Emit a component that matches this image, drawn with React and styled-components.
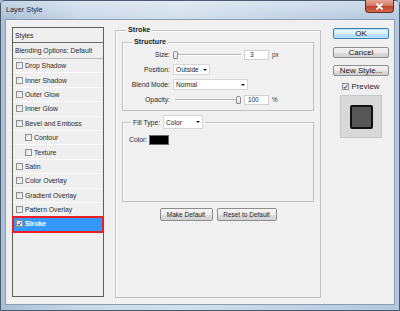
import React from 'react';
import styled, { createGlobalStyle } from 'styled-components';

const GlobalStyle = createGlobalStyle`
  html, body {
    margin: 0;
    padding: 0;
    background: #9fb4cc;
  }
  body {
    width: 400px;
    height: 311px;
    overflow: hidden;
    font-family: "Liberation Sans", Arial, sans-serif;
    color: #1f1f1f;
  }
`;

const Window = styled.div`
  width: 400px;
  height: 311px;
  box-sizing: border-box;
  display: flex;
  flex-direction: column;
  border: 1px solid #4a5a6c;
  border-radius: 5px 5px 0 0;
  background: linear-gradient(90deg, #a9bfd6 0%, #c9d8e8 20%, #d2dfec 45%, #c3d4e6 70%, #b3c8de 100%);
`;

const TitleBar = styled.div`
  height: 18px;
  display: flex;
  justify-content: space-between;
  align-items: flex-start;
  padding-left: 5px;
  background: linear-gradient(180deg, rgba(255,255,255,0.35), rgba(255,255,255,0));
`;

const Title = styled.span`
  font-size: 7.3px;
  line-height: 18px;
  color: #1c2a3a;
`;

const CloseButton = styled.div`
  width: 29px;
  height: 13px;
  margin: -1px 5px 0 0;
  box-sizing: border-box;
  border: 1px solid #6e2a20;
  border-top: none;
  border-radius: 0 0 4px 4px;
  background: linear-gradient(180deg, #e6a898 0%, #d47a64 45%, #c1442c 55%, #d06a4c 100%);
  display: flex;
  align-items: center;
  justify-content: center;
`;

const Client = styled.div`
  flex: 1;
  margin: 0 4px 5px 4px;
  border: 1px solid #8a9cb1;
  background: #f0f0f0;
  display: flex;
  align-items: flex-start;
  padding: 6px 0 0 6px;
`;

const StylesPanel = styled.div`
  width: 92px;
  height: 270px;
  margin-top: 1px;
  box-sizing: border-box;
  border: 1px solid #5e5e5e;
  background: #efefef;
  display: flex;
  flex-direction: column;
`;

const PanelHeader = styled.div`
  height: ${(p) => p.$h}px;
  box-sizing: border-box;
  border-bottom: 1px solid ${(p) => p.$line};
  display: flex;
  align-items: center;
  padding-left: 2px;
  font-size: 6.8px;
`;

const PanelRow = styled.div`
  height: 14.4px;
  box-sizing: border-box;
  border-bottom: 1px solid ${(p) => (p.$selected ? '#3399ff' : '#fbfbfb')};
  display: flex;
  align-items: center;
  gap: 2px;
  padding-left: ${(p) => (p.$indent ? 12 : 3)}px;
  font-size: 6.8px;
  color: ${(p) => (p.$selected ? '#ffffff' : '#2a2a2a')};
  font-weight: ${(p) => (p.$selected ? 700 : 400)};
  background: ${(p) => (p.$selected ? '#3399ff' : 'transparent')};
  outline: ${(p) => (p.$selected ? '2px solid #ee1c24' : 'none')};
  outline-offset: -1px;
`;

const CheckBox = styled.span`
  width: 7px;
  height: 7px;
  box-sizing: border-box;
  border: 1px solid #8f8f8f;
  background: linear-gradient(135deg, #dcdcdc, #ffffff);
  display: inline-flex;
  align-items: center;
  justify-content: center;
  flex-shrink: 0;
`;

const GroupBox = styled.fieldset`
  margin: ${(p) => p.$margin || '0'};
  padding: ${(p) => p.$pad || '0'};
  box-sizing: border-box;
  width: ${(p) => p.$w}px;
  height: ${(p) => (p.$h ? `${p.$h}px` : 'auto')};
  border: 1px solid #c2c2c2;
  box-shadow: inset 1px 1px 0 #fbfbfb;
  min-width: 0;
`;

const GroupLegend = styled.legend`
  margin-left: ${(p) => p.$offset}px;
  padding: 0 2px;
  font-size: 7.2px;
  line-height: 8px;
  font-weight: 700;
  color: #1a1a1a;
`;

const FillLegend = styled.legend`
  margin-left: 8px;
  padding: 0 2px;
  display: flex;
  align-items: center;
  gap: 3px;
  font-size: 6.8px;
`;

const FieldRow = styled.div`
  height: 15px;
  display: flex;
  align-items: center;
`;

const FieldLabel = styled.span`
  width: 47px;
  margin-right: ${(p) => p.$gap || 3}px;
  text-align: right;
  font-size: 6.8px;
  color: #2a2a2a;
`;

const Slider = styled.div`
  width: ${(p) => p.$w}px;
  height: 9px;
  display: flex;
  align-items: center;
  justify-content: ${(p) => (p.$end ? 'flex-end' : 'flex-start')};
  background: linear-gradient(180deg, transparent 4px, #b5b5b5 4px, #b5b5b5 5px, #ffffff 5px, #ffffff 6px, transparent 6px);
  margin-right: 3px;
`;

const Thumb = styled.span`
  width: 5px;
  height: 8px;
  box-sizing: border-box;
  border: 1px solid #8a8a8a;
  border-radius: 2px 2px 1px 1px;
  background: linear-gradient(180deg, #ffffff, #e2e2e2);
`;

const NumberBox = styled.div`
  width: 25px;
  height: 10px;
  box-sizing: border-box;
  border: 1px solid #d2d2d2;
  background: #ffffff;
  display: flex;
  align-items: center;
  padding-left: ${(p) => p.$pad}px;
  font-size: 6.4px;
`;

const Unit = styled.span`
  margin-left: 3px;
  font-size: 6.4px;
  color: #3a3a3a;
`;

const Select = styled.div`
  width: ${(p) => p.$w}px;
  height: ${(p) => p.$h}px;
  box-sizing: border-box;
  border: 1px solid #d6d6d6;
  background: #ffffff;
  display: flex;
  align-items: center;
  justify-content: space-between;
  padding: 0 2px 0 2px;
  font-size: 6.6px;
  font-weight: 400;
  color: #1a1a1a;
`;

const Arrow = styled.span`
  width: 0;
  height: 0;
  border-left: 2px solid transparent;
  border-right: 2px solid transparent;
  border-top: 2.5px solid #111;
`;

const ColorRow = styled.div`
  display: flex;
  align-items: flex-start;
  gap: 2px;
  padding: 6px 0 0 6px;
  height: 66px;
  font-size: 6.8px;
  color: #2a2a2a;
`;

const ColorText = styled.span`
  line-height: 10px;
`;

const Swatch = styled.span`
  width: 20px;
  height: 10px;
  box-sizing: border-box;
  border: 1px solid #6a6a6a;
  background: #000000;
`;

const ButtonRow = styled.div`
  display: flex;
  justify-content: center;
  gap: 4px;
  margin-top: 6px;
`;

const SmallButton = styled.div`
  width: ${(p) => p.$w}px;
  height: 13px;
  box-sizing: border-box;
  border: 1px solid #8d8d8d;
  border-radius: 2px;
  background: linear-gradient(180deg, #f5f5f5 0%, #ebebeb 50%, #dcdcdc 51%, #d2d2d2 100%);
  display: flex;
  align-items: center;
  justify-content: center;
  font-size: 6.5px;
  color: #1f1f1f;
`;

const SideColumn = styled.div`
  width: 56px;
  margin: 2px 0 0 12px;
  display: flex;
  flex-direction: column;
  align-items: center;
`;

const DialogButton = styled.div`
  width: 56px;
  height: 11px;
  box-sizing: border-box;
  margin-bottom: ${(p) => p.$mb}px;
  border: 1px solid ${(p) => (p.$primary ? '#3c7fb1' : '#8e8e8e')};
  border-radius: 2px;
  background: ${(p) =>
    p.$primary
      ? 'linear-gradient(180deg, #eaf6fd 0%, #d9f0fc 50%, #bee6fd 51%, #a7d9f5 100%)'
      : 'linear-gradient(180deg, #f2f2f2 0%, #ebebeb 50%, #dddddd 51%, #cfcfcf 100%)'};
  box-shadow: ${(p) => (p.$primary ? 'inset 0 0 0 1px #bfe6fa' : 'none')};
  display: flex;
  align-items: center;
  justify-content: center;
  font-size: 8px;
  color: #1a1a1a;
`;

const PreviewCheck = styled.div`
  display: flex;
  align-items: center;
  gap: 2px;
  font-size: 7.9px;
  height: 9px;
  margin-top: -1px;
`;

const PreviewBox = styled.div`
  width: 42px;
  height: 43px;
  margin-top: 4px;
  box-sizing: border-box;
  border: 1px solid #c6c6c6;
  background: #d8d8d8;
  display: flex;
  align-items: center;
  justify-content: center;
`;

const PreviewSwatch = styled.div`
  width: 23px;
  height: 24px;
  box-sizing: border-box;
  border: 2px solid #111;
  border-radius: 2px;
  background: #565656;
`;

const Check = () => (
  <svg width="6" height="6" viewBox="0 0 6 6">
    <path d="M1 3 L2.5 4.8 L5 0.8" fill="none" stroke="#1f3fa6" strokeWidth="1.2" />
  </svg>
);

const effects = [
  { name: 'Drop Shadow' },
  { name: 'Inner Shadow' },
  { name: 'Outer Glow' },
  { name: 'Inner Glow' },
  { name: 'Bevel and Emboss' },
  { name: 'Contour', indent: true },
  { name: 'Texture', indent: true },
  { name: 'Satin' },
  { name: 'Color Overlay' },
  { name: 'Gradient Overlay' },
  { name: 'Pattern Overlay' },
  { name: 'Stroke', selected: true },
];

export default function App() {
  return (
    <>
      <GlobalStyle />
      <Window>
        <TitleBar>
          <Title>Layer Style</Title>
          <CloseButton>
            <svg width="9" height="7" viewBox="0 0 9 7">
              <path d="M1.5 0.5 L7.5 6.5 M7.5 0.5 L1.5 6.5" stroke="#ffffff" strokeWidth="1.8" />
            </svg>
          </CloseButton>
        </TitleBar>
        <Client>
          <StylesPanel>
            <PanelHeader $h={15} $line="#6a6a6a">Styles</PanelHeader>
            <PanelHeader $h={16} $line="#bdbdbd">Blending Options: Default</PanelHeader>
            {effects.map((e) => (
              <PanelRow key={e.name} $indent={e.indent} $selected={e.selected}>
                <CheckBox>{e.selected && <Check />}</CheckBox>
                {e.name}
              </PanelRow>
            ))}
          </StylesPanel>

          <GroupBox $w={206} $h={272} $margin="0 0 0 11px" $pad="4px 6px 0 6px">
            <GroupLegend $offset={4}>Stroke</GroupLegend>
            <GroupBox $w={192} $pad="1px 0 3px 0">
              <GroupLegend $offset={9}>Structure</GroupLegend>
              <FieldRow>
                <FieldLabel>Size:</FieldLabel>
                <Slider $w={68}>
                  <Thumb />
                </Slider>
                <NumberBox $pad={5}>3</NumberBox>
                <Unit>px</Unit>
              </FieldRow>
              <FieldRow>
                <FieldLabel>Position:</FieldLabel>
                <Select $w={37} $h={11}>
                  Outside
                  <Arrow />
                </Select>
              </FieldRow>
              <FieldRow>
                <FieldLabel>Blend Mode:</FieldLabel>
                <Select $w={75} $h={11}>
                  Normal
                  <Arrow />
                </Select>
              </FieldRow>
              <FieldRow>
                <FieldLabel $gap={5}>Opacity:</FieldLabel>
                <Slider $w={66} $end>
                  <Thumb />
                </Slider>
                <NumberBox $pad={3}>100</NumberBox>
                <Unit>%</Unit>
              </FieldRow>
            </GroupBox>

            <GroupBox $w={192} $margin="4px 0 0 0">
              <FillLegend>
                Fill Type:
                <Select $w={40} $h={14}>
                  Color
                  <Arrow />
                </Select>
              </FillLegend>
              <ColorRow>
                <ColorText>Color:</ColorText>
                <Swatch />
              </ColorRow>
            </GroupBox>

            <ButtonRow>
              <SmallButton $w={53}>Make Default</SmallButton>
              <SmallButton $w={60}>Reset to Default</SmallButton>
            </ButtonRow>
          </GroupBox>

          <SideColumn>
            <DialogButton $primary $mb={8}>OK</DialogButton>
            <DialogButton $mb={7}>Cancel</DialogButton>
            <DialogButton $mb={7}>New Style...</DialogButton>
            <PreviewCheck>
              <CheckBox>
                <Check />
              </CheckBox>
              Preview
            </PreviewCheck>
            <PreviewBox>
              <PreviewSwatch />
            </PreviewBox>
          </SideColumn>
        </Client>
      </Window>
    </>
  );
}
